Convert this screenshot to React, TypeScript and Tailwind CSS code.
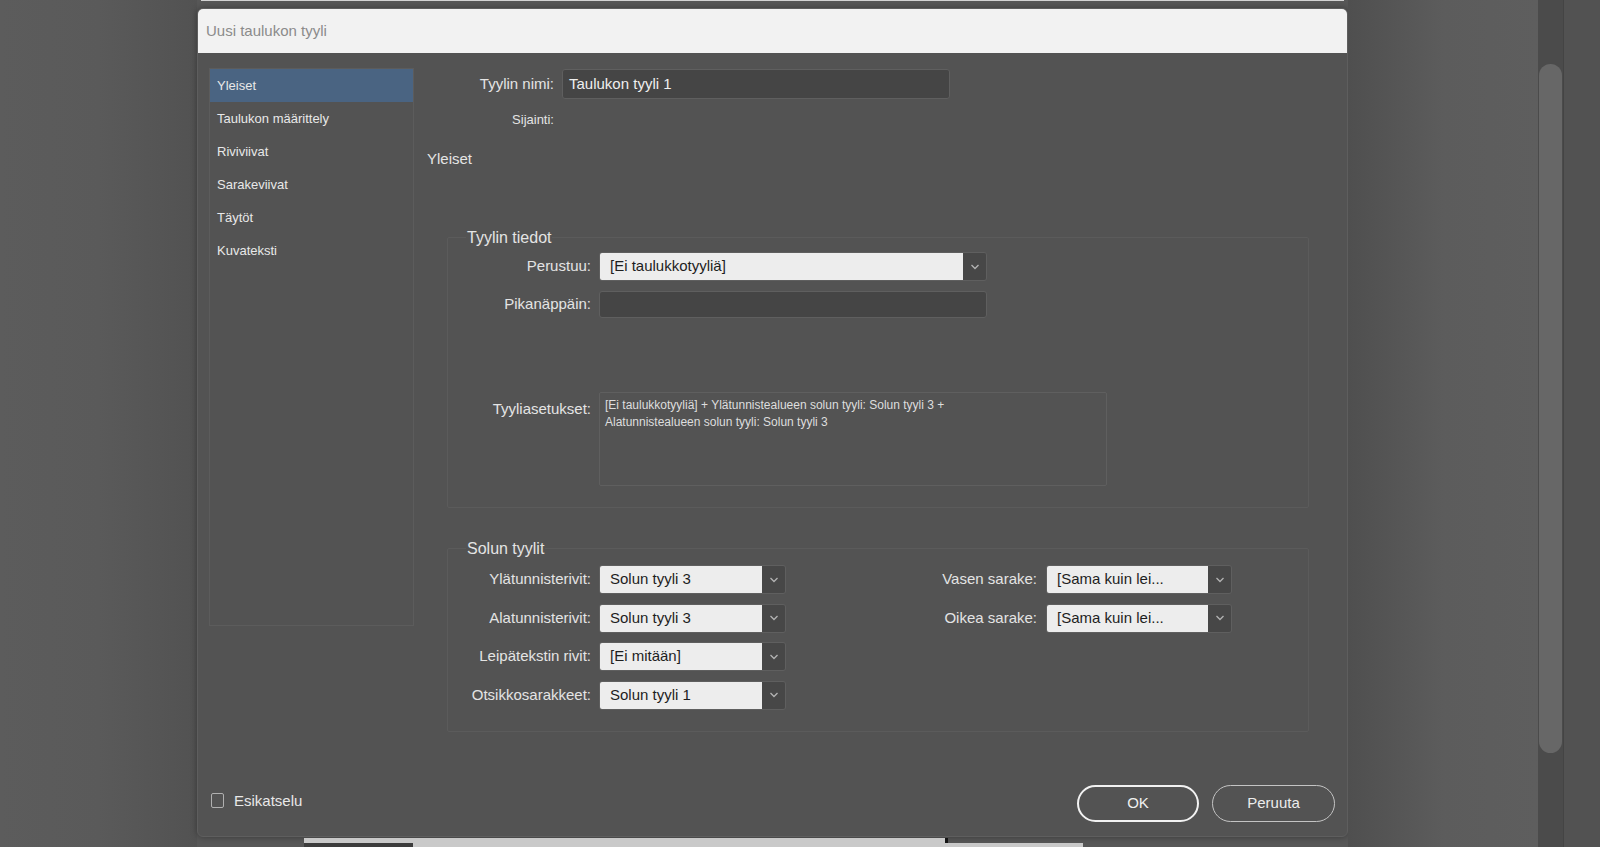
import React from "react";

const Chevron = () => (
  <svg width="10" height="6" viewBox="0 0 10 6">
    <path d="M1.5 1l3.5 3.5L8.5 1" fill="none" stroke="#b3b3b3" strokeWidth="1.3" />
  </svg>
);

interface SelectProps {
  value: string;
  className: string;
}

// pudotusvalikko: vaalea arvokenttä + tumma nuolilaatikko
const Select: React.FC<SelectProps> = ({ value, className }) => (
  <div className={`flex h-[29px] shrink-0 overflow-hidden rounded-[3px] border border-[#5f5f5f] ${className}`}>
    <div className="flex flex-1 items-center whitespace-nowrap bg-[#ededed] pl-[10px] text-[15px] text-[#1e1e1e]">
      {value}
    </div>
    <div className="flex w-[23px] items-center justify-center bg-[#474747]">
      <Chevron />
    </div>
  </div>
);

const navItems = [
  "Yleiset",
  "Taulukon määrittely",
  "Riviviivat",
  "Sarakeviivat",
  "Täytöt",
  "Kuvateksti",
];

const leftRows = [
  { label: "Ylätunnisterivit:", value: "Solun tyyli 3" },
  { label: "Alatunnisterivit:", value: "Solun tyyli 3" },
  { label: "Leipätekstin rivit:", value: "[Ei mitään]" },
  { label: "Otsikkosarakkeet:", value: "Solun tyyli 1" },
];

const rightRows = [
  { label: "Vasen sarake:", value: "[Sama kuin lei..." },
  { label: "Oikea sarake:", value: "[Sama kuin lei..." },
];

export default function App() {
  return (
    <div className="flex h-[847px] w-[1600px] overflow-hidden bg-[#5b5b5b] font-['Liberation_Sans',Arial,sans-serif] text-[#e4e4e4]">
      {/* tausta vasemmalla */}
      <div className="w-[197px] shrink-0 bg-linear-to-r from-[#5c5c5c] via-[#5a5a5a] to-[#525252]" />

      {/* dialogin sarake */}
      <div className="flex w-[1151px] shrink-0 flex-col bg-[#575757]">
        <div className="mx-[4px] h-px bg-[#d2d2d2]" />
        <div className="h-[7px]" />

        <div className="flex h-[829px] flex-col overflow-hidden rounded-[6px] border border-[#5e5e5e] bg-[#535353] shadow-[0_0_6px_rgba(0,0,0,0.35)]">
          <div className="flex h-[44px] items-center bg-[#f2f2f2] pl-[8px] text-[15px] text-[#8b8b8b]">
            Uusi taulukon tyyli
          </div>

          <div className="flex flex-1 pl-[11px] pt-[15px]">
            {/* vasen valikko */}
            <div className="h-[558px] w-[205px] shrink-0 border border-[#5c5c5c]">
              {navItems.map((item, i) => (
                <div
                  key={item}
                  className={`flex h-[33px] items-center pl-[7px] text-[13px] text-[#e8e8e8] ${
                    i === 0 ? "bg-[#4a6482]" : ""
                  }`}
                >
                  {item}
                </div>
              ))}
            </div>

            {/* sisältö */}
            <div className="ml-[13px] flex flex-col">
              <div className="mt-px flex h-[30px] items-center">
                <div className="w-[127px] text-right text-[15px]">Tyylin nimi:</div>
                <div className="ml-[8px] flex h-[30px] w-[388px] items-center rounded-[3px] border border-[#5f5f5f] bg-[#454545] pl-[6px] text-[15px] text-[#efefef]">
                  Taulukon tyyli 1
                </div>
              </div>
              <div className="mt-[11px] flex h-[20px] items-center">
                <div className="w-[127px] text-right text-[13px]">Sijainti:</div>
              </div>
              <div className="mt-[19px] flex h-[20px] items-center text-[15px]">Yleiset</div>

              {/* Tyylin tiedot */}
              <div className="ml-[20px] mt-[68px] w-[862px] rounded-[2px] border border-[#5b5b5b] pb-[21px]">
                <div className="-mt-[10px] ml-[18px] h-[20px] w-fit bg-[#535353] px-px text-[16px] leading-[20px]">
                  Tyylin tiedot
                </div>
                <div className="mt-[4px] flex items-center">
                  <div className="w-[143px] text-right text-[15px]">Perustuu:</div>
                  <Select value="[Ei taulukkotyyliä]" className="ml-[8px] w-[388px]" />
                </div>
                <div className="mt-[10px] flex items-center">
                  <div className="w-[143px] text-right text-[15px]">Pikanäppäin:</div>
                  <div className="ml-[8px] h-[27px] w-[388px] rounded-[3px] border border-[#5f5f5f] bg-[#454545]" />
                </div>
                <div className="mt-[74px] flex items-start">
                  <div className="mt-[8px] w-[143px] text-right text-[15px] leading-[18px]">Tyyliasetukset:</div>
                  <div className="ml-[8px] h-[94px] w-[508px] whitespace-nowrap rounded-[2px] border border-[#5f5f5f] px-[5px] pt-[4px] text-[12px] leading-[17px] text-[#dedede]">
                    [Ei taulukkotyyliä] + Ylätunnistealueen solun tyyli: Solun tyyli 3 +
                    <br />
                    Alatunnistealueen solun tyyli: Solun tyyli 3
                  </div>
                </div>
              </div>

              {/* Solun tyylit */}
              <div className="ml-[20px] mt-[40px] w-[862px] rounded-[2px] border border-[#5b5b5b] pb-[21px]">
                <div className="-mt-[10px] ml-[18px] h-[20px] w-fit bg-[#535353] px-px text-[16px] leading-[20px]">
                  Solun tyylit
                </div>
                <div className="mt-[6px] flex">
                  <div className="flex flex-col gap-[9.5px]">
                    {leftRows.map((r) => (
                      <div key={r.label} className="flex items-center">
                        <div className="w-[143px] text-right text-[15px]">{r.label}</div>
                        <Select value={r.value} className="ml-[8px] w-[187px]" />
                      </div>
                    ))}
                  </div>
                  <div className="flex flex-col gap-[9.5px]">
                    {rightRows.map((r) => (
                      <div key={r.label} className="flex items-center">
                        <div className="w-[251px] text-right text-[15px]">{r.label}</div>
                        <Select value={r.value} className="ml-[9px] w-[186px]" />
                      </div>
                    ))}
                  </div>
                </div>
              </div>
            </div>
          </div>

          {/* alapalkki */}
          <div className="flex items-end justify-between pb-[14px] pl-[13px] pr-[12px]">
            <div className="mb-[10px] flex items-center">
              <div className="h-[15px] w-[13px] rounded-[2px] border border-[#b0b0b0]" />
              <span className="ml-[10px] text-[15px] text-[#e8e8e8]">Esikatselu</span>
            </div>
            <div className="flex gap-[13px]">
              <button className="h-[37px] w-[122px] rounded-full border-2 border-[#f2f2f2] text-[15px] text-[#f0f0f0]">
                OK
              </button>
              <button className="h-[37px] w-[123px] rounded-full border border-[#c4c4c4] text-[15px] text-[#ececec]">
                Peruuta
              </button>
            </div>
          </div>
        </div>

        {/* alla näkyvät ikkunat */}
        <div className="h-px" />
        <div className="flex h-[5px]">
          <div className="ml-[107px] w-[641px] bg-[#c9c9c9]" />
          <div className="w-[3px] bg-[#151515]" />
        </div>
        <div className="flex h-[4px]">
          <div className="ml-[107px] w-[109px] bg-[#3c3c3c]" />
          <div className="w-[670px] bg-[#c9c9c9]" />
        </div>
      </div>

      {/* tausta oikealla */}
      <div className="w-[190px] shrink-0 bg-linear-to-r from-[#4f4f4f] via-[#5c5c5c] to-[#5e5e5e]" />

      {/* vierityspalkki */}
      <div className="w-[26px] shrink-0 border-r border-[#444] bg-[#4b4b4b] px-px pt-[64px]">
        <div className="h-[689px] rounded-full bg-[#676767]" />
      </div>
      <div className="flex-1 bg-[#525252]" />
    </div>
  );
}
